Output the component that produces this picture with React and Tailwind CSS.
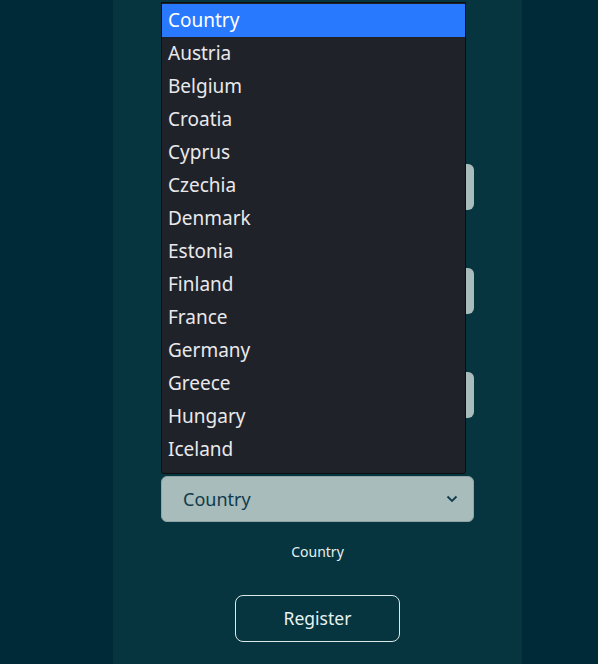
import React from 'react';

const countries = [
  'Country', 'Austria', 'Belgium', 'Croatia', 'Cyprus', 'Czechia', 'Denmark',
  'Estonia', 'Finland', 'France', 'Germany', 'Greece', 'Hungary', 'Iceland',
];

const Field = ({ label, children }) => (
  <div className="flex flex-col items-center mb-[18px]">
    {children}
    <div className="mt-5 text-sm leading-5 text-[#e3f1f1]">{label}</div>
  </div>
);

const App = () => {
  return (
    <div className="relative min-h-[664px] bg-[#012a39] font-['Noto_Sans',sans-serif] overflow-hidden">
      <div className="ml-[113px] w-[409px] min-h-[664px] bg-[#06343f] px-12 pt-[164px] flex flex-col">
        <Field label="Name">
          <div className="w-full h-[46px] rounded-md bg-[#a8bcbb]" />
        </Field>
        <Field label="Email">
          <div className="w-full h-[46px] rounded-md bg-[#a8bcbb]" />
        </Field>
        <Field label="Password">
          <div className="w-full h-[46px] rounded-md bg-[#a8bcbb]" />
        </Field>
        <Field label="Country">
          <div className="w-full h-[46px] rounded-md bg-[#a8bcbb] border border-[#8fa5a5] flex items-center justify-between pl-[21px] pr-[15px]">
            <span className="text-[18px] text-[#0f3b4c]">Country</span>
            <svg width="12" height="8" viewBox="0 0 12 8" fill="none">
              <path d="M1.5 1.5 L6 6 L10.5 1.5" stroke="#0f3b4c" strokeWidth="1.8" />
            </svg>
          </div>
        </Field>
        <div className="flex justify-center mt-[15px]">
          <button className="w-[165px] h-[47px] rounded-lg border border-[#dbe9e9] text-[17.5px] text-[#e6f2f2]">
            Register
          </button>
        </div>
      </div>

      {/* open native-style dropdown list */}
      <div className="absolute left-[161px] top-[2px] w-[305px] h-[472px] bg-[#20222a] border border-[#0c0d10] rounded-b-[3px] pt-px">
        {countries.map((c, i) => (
          <div
            key={c}
            className={
              i === 0
                ? 'h-[33px] flex items-center pl-[6px] text-[19px] bg-[#2979ff] text-white'
                : 'h-[33px] flex items-center pl-[6px] text-[19px] text-[#e9e9ec]'
            }
          >
            {c}
          </div>
        ))}
      </div>
    </div>
  );
};

export default App;
